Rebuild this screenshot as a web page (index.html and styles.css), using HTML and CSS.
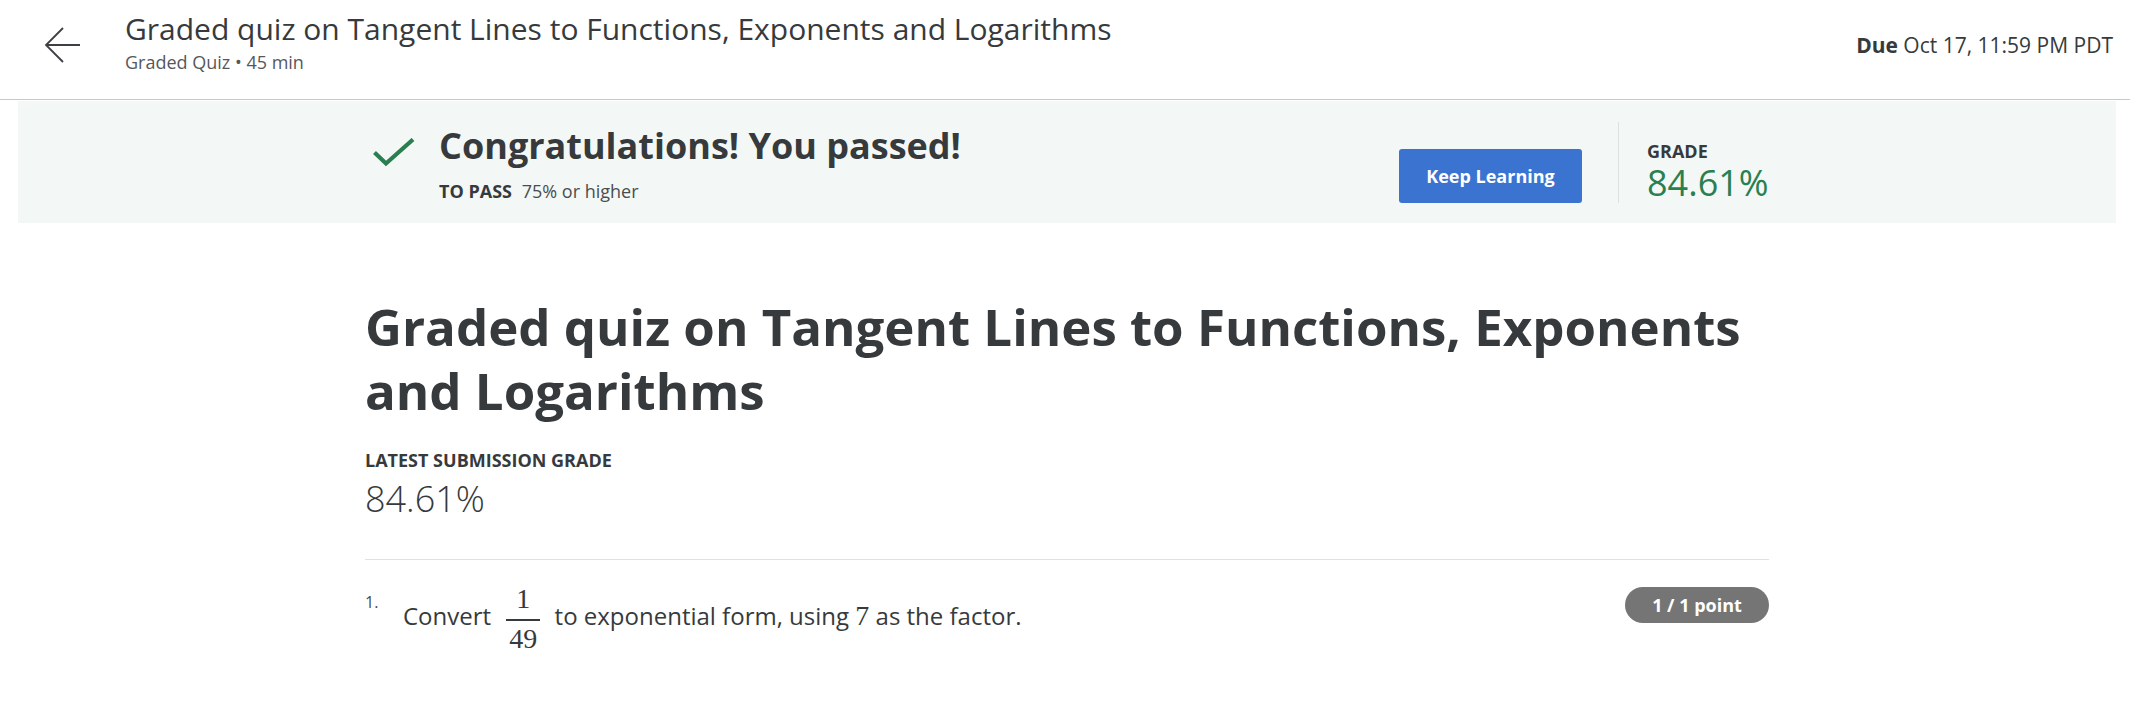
FILE: index.html
```html
<!DOCTYPE html>
<html lang="en">
<head>
<meta charset="utf-8">
<title>Graded quiz</title>
<link rel="stylesheet" href="styles.css">
</head>
<body>
<header class="topbar">
  <a class="back" href="#" aria-label="Back">
    <svg width="38" height="38" viewBox="0 0 38 38"><path d="M36 19H2M19 2L2 19l17 17" fill="none" stroke="#3d4043" stroke-width="1.8"/></svg>
  </a>
  <div class="topbar-title">
    <h1 class="item-name">Graded quiz on Tangent Lines to Functions, Exponents and Logarithms</h1>
    <div class="item-meta">Graded Quiz • 45 min</div>
  </div>
  <div class="due"><strong>Due</strong> Oct 17, 11:59 PM PDT</div>
</header>

<section class="banner">
  <div class="container banner-row">
    <div class="pass">
      <svg class="check" width="42" height="30" viewBox="0 0 42 30"><path d="M1.5 14.5l11.5 11L40 1.5" fill="none" stroke="#2a7f50" stroke-width="4.2"/></svg>
      <div class="pass-text">
        <h2 class="pass-title">Congratulations! You passed!</h2>
        <div class="pass-req"><strong>TO PASS</strong> 75% or higher</div>
      </div>
    </div>
    <div class="banner-actions">
      <button class="btn-primary">Keep Learning</button>
      <div class="grade-box">
        <div class="label grade-label">GRADE</div>
        <div class="grade-value">84.61%</div>
      </div>
    </div>
  </div>
</section>

<main class="main">
  <div class="container">
    <h2 class="quiz-title">Graded quiz on Tangent Lines to Functions, Exponents and Logarithms</h2>
    <div class="label">LATEST SUBMISSION GRADE</div>
    <div class="latest-grade">84.61%</div>
    <div class="question">
      <div class="q-num">1.</div>
      <div class="q-body">Convert <span class="frac"><span class="num">1</span><span class="den">49</span></span> to exponential form, using <span class="math">7</span> as the factor.</div>
      <div class="points">1 / 1 point</div>
    </div>
  </div>
</main>
</body>
</html>
```

FILE: styles.css
```css
* { box-sizing: border-box; }
html, body { margin: 0; padding: 0; background: #fff; }
body {
  font-family: "Open Sans", "Noto Sans", sans-serif;
  color: #373a3c;
}

.topbar {
  display: flex;
  align-items: flex-start;
  height: 100px;
  border-bottom: 1px solid #c8c8c8;
  padding: 0 17px 0 44px;
}
.back { display: block; width: 38px; height: 38px; margin-top: 26px; }
.topbar-title { flex: 1; margin-left: 43px; padding-top: 11px; }
.item-name {
  margin: 0;
  font-size: 30px;
  font-weight: 400;
  line-height: 36px;
  color: #373a3c;
}
.item-meta { margin-top: 4px; font-size: 18px; line-height: 22px; color: #55585b; }
.due { padding-top: 31px; font-size: 21px; line-height: 28px; color: #373a3c; }
.due strong { font-weight: 700; }

.banner {
  background: #f3f8f6;
  margin: 1px 14px 0 18px;
  padding: 21px 0 20px;
}
.container { width: 1404px; margin: 0 auto; }
.banner-row { display: flex; justify-content: space-between; align-items: stretch; }
.pass { display: flex; align-items: flex-start; }
.check { margin: 16px 24px 0 8px; }
.pass-title {
  margin: 1px 0 0;
  font-size: 36px;
  line-height: 46px;
  font-weight: 700;
  color: #373a3c;
}
.pass-req { margin-top: 10px; font-size: 18px; line-height: 24px; color: #4a4d50; }
.pass-req strong { margin-right: 5px; color: #373a3c; }

.banner-actions { display: flex; align-items: flex-end; }
.btn-primary {
  width: 183px;
  height: 54px;
  border: 0;
  border-radius: 3px;
  background: #3b73d0;
  color: #fff;
  font-family: inherit;
  font-size: 18px;
  font-weight: 700;
  margin-right: 36px;
}
.grade-box {
  border-left: 1px solid #dde2e0;
  padding: 20px 0 0 28px;
  width: 151px;
  height: 81px;
}
.label {
  font-size: 18px;
  font-weight: 700;
  line-height: 24px;
  color: #373a3c;
}
.grade-label { line-height: 18px; }
.grade-value {
  margin-top: 2px;
  font-size: 36px;
  line-height: 42px;
  font-weight: 400;
  color: #2a7f50;
}

.main { margin: 0 14px 0 18px; padding-top: 71px; }
.quiz-title {
  margin: 0 0 26px;
  font-size: 51px;
  line-height: 64px;
  font-weight: 700;
  color: #373a3c;
}
.latest-grade {
  font-size: 36px;
  line-height: 44px;
  font-weight: 300;
  color: #373a3c;
  margin-top: 5px;
  padding-bottom: 38px;
  border-bottom: 1px solid #e1e1e1;
}
.question {
  display: flex;
  align-items: flex-start;
  padding-top: 25px;
}
.q-num { width: 38px; margin-top: 6px; font-size: 16px; line-height: 22px; color: #4a4d50; }
.q-body {
  flex: 1;
  font-size: 24px;
  line-height: 34px;
  color: #373a3c;
}
.frac {
  display: inline-flex;
  flex-direction: column;
  align-items: stretch;
  text-align: center;
  vertical-align: middle;
  font-family: "Liberation Serif", "DejaVu Serif", serif;
  font-size: 28px;
  line-height: 28px;
  margin: 0 8px 0 9px;
}
.frac .num { padding: 0 3px 6px; border-bottom: 2px solid #373a3c; }
.frac .den { padding: 4px 3px 0; }
.math { font-family: "Liberation Serif", "DejaVu Serif", serif; font-size: 28px; }
.points {
  background: #757575;
  color: #fff;
  font-size: 18px;
  font-weight: 700;
  border-radius: 18px;
  width: 144px;
  height: 36px;
  line-height: 36px;
  text-align: center;
  margin-top: 2px;
}
```
